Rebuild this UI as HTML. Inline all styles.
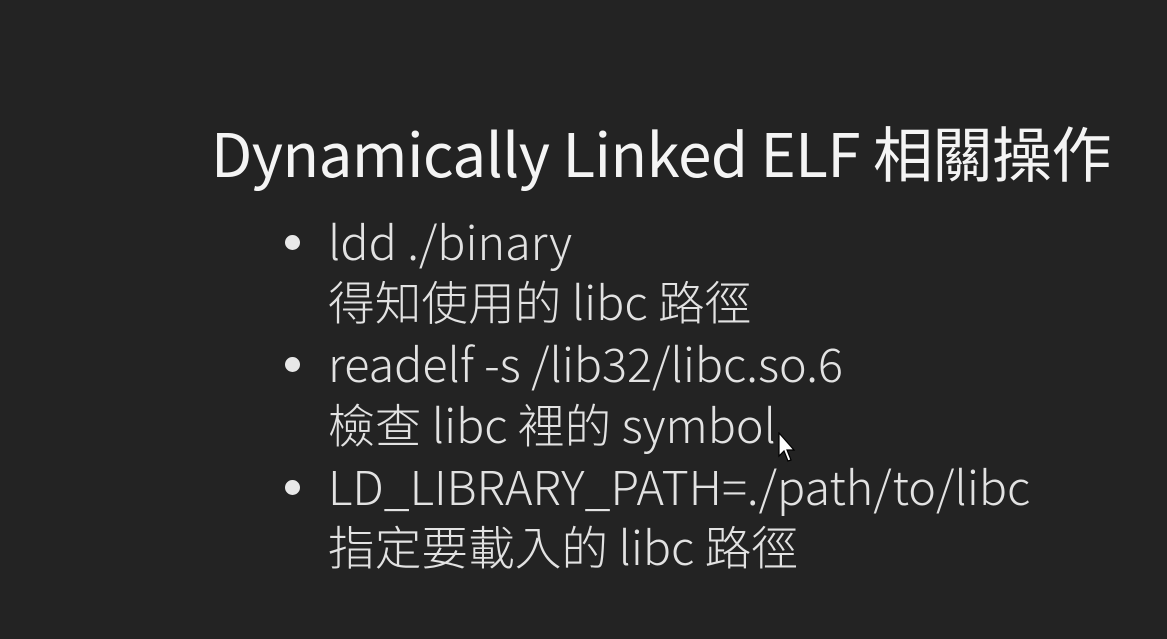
<!DOCTYPE html>
<html><head><meta charset="utf-8"><style>
html,body{margin:0;padding:0}
body{width:1167px;height:639px;background:#232323;overflow:hidden;position:relative;font-family:"Noto Sans CJK TC","Liberation Sans",sans-serif;}
.t{position:absolute;left:211px;top:112px;font-size:60px;color:#f4f4f4;white-space:nowrap;line-height:80px;letter-spacing:-0.5px}
.l{position:absolute;left:328px;font-size:46.7px;color:#e2e2e2;white-space:nowrap;line-height:60px;font-weight:300}
.b{position:absolute;left:285px;width:15px;height:15px;border-radius:50%;background:#e8e8e8}
</style></head><body>
<div class="t">Dynamically Linked ELF 相關操作</div>
<div class="b" style="top:235px"></div>
<div class="l" style="top:211px">ldd ./binary</div>
<div class="l" style="top:271px">得知使用的 libc 路徑</div>
<div class="b" style="top:357px"></div>
<div class="l" style="top:333px">readelf -s /lib32/libc.so.6</div>
<div class="l" style="top:394px">檢查 libc 裡的 symbol</div>
<div class="b" style="top:480px"></div>
<div class="l" style="top:456px">LD_LIBRARY_PATH=./path/to/libc</div>
<div class="l" style="top:516px">指定要載入的 libc 路徑</div>
<svg style="position:absolute;left:778px;top:432px" width="20" height="32" viewBox="0 0 20 32"><path d="M1 1 L1 24 L6 19 L10 29 L13 28 L9 18 L16 18 Z" fill="#fff" stroke="#000" stroke-width="1.2"/></svg>
</body></html>
